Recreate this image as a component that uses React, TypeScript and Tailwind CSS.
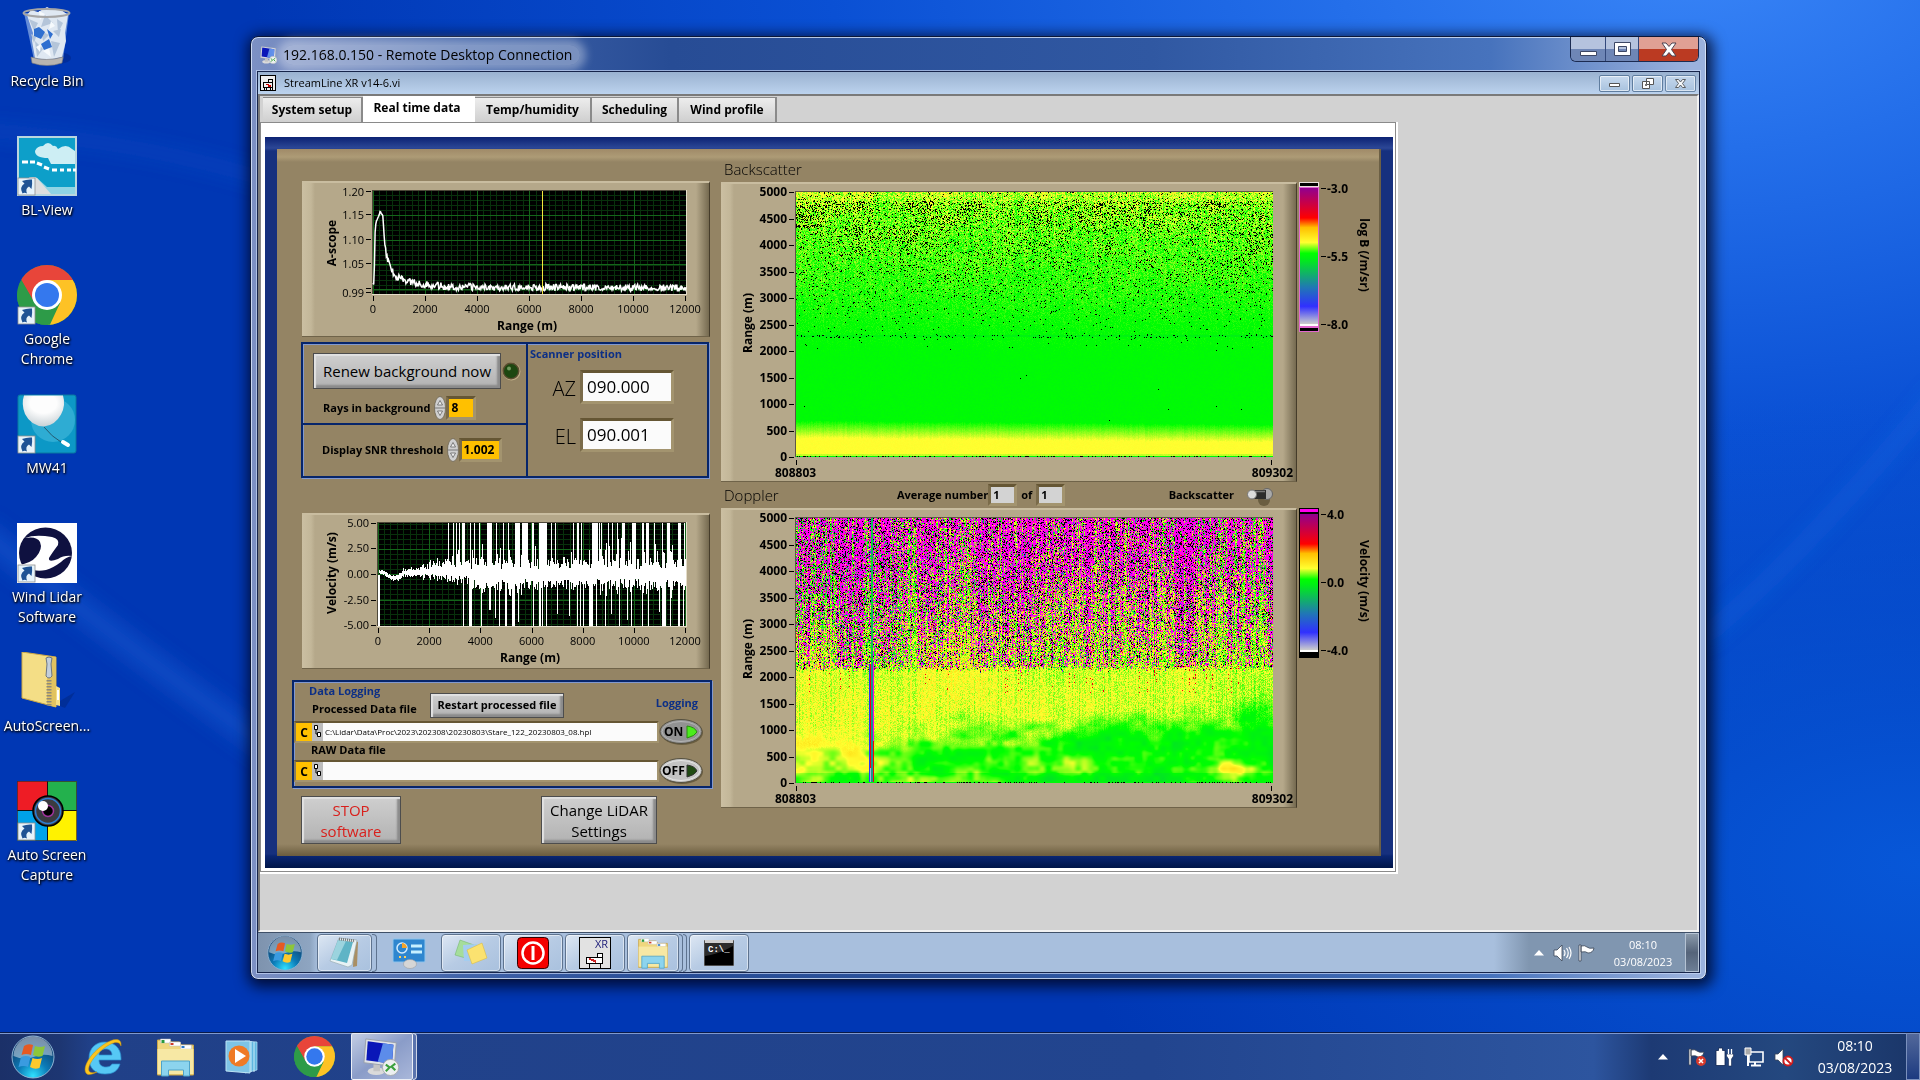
import { useLayoutEffect, useRef, type ReactNode } from "react";

type Rgb = [number, number, number];

function makeRandom(seed: number) {
  let a = seed;
  return () => {
    a = (a + 0x6d2b79f5) | 0;
    let t = Math.imul(a ^ (a >>> 15), 1 | a);
    t = (t + Math.imul(t ^ (t >>> 7), 61 | t)) ^ t;
    return ((t ^ (t >>> 14)) >>> 0) / 4294967296;
  };
}

function hash(x: number, y: number, seed: number) {
  let h = Math.imul(x, 374761393) + Math.imul(y, 668265263) + Math.imul(seed, 974634777);
  h = Math.imul(h ^ (h >>> 13), 1274126177);
  h = Math.imul(h ^ (h >>> 15), 2246822519);
  return ((h ^ (h >>> 16)) >>> 0) / 4294967296;
}

function smoothNoise(x: number, y: number, seed: number) {
  const xi = Math.floor(x);
  const yi = Math.floor(y);
  const fx = x - xi;
  const fy = y - yi;
  const u = fx * fx * (3 - 2 * fx);
  const v = fy * fy * (3 - 2 * fy);
  const top = hash(xi, yi, seed) * (1 - u) + hash(xi + 1, yi, seed) * u;
  const bottom = hash(xi, yi + 1, seed) * (1 - u) + hash(xi + 1, yi + 1, seed) * u;
  return top * (1 - v) + bottom * v;
}

function clamp01(v: number) {
  return Math.min(1, Math.max(0, v));
}

// colour ramp shared by both intensity plots, 0 = bottom of the scale
const RAMP: [number, Rgb][] = [
  [0, [205, 205, 205]],
  [0.13, [48, 48, 255]],
  [0.27, [32, 120, 180]],
  [0.48, [0, 240, 20]],
  [0.52, [0, 255, 0]],
  [0.6, [255, 255, 48]],
  [0.71, [255, 190, 0]],
  [0.78, [255, 0, 0]],
  [1, [144, 0, 144]],
];

function rampColor(v: number): Rgb {
  if (v <= 0) return [0, 0, 0];
  if (v >= 1) return [255, 0, 238];
  for (let i = 1; i < RAMP.length; i++) {
    const [p1, c1] = RAMP[i];
    if (v <= p1) {
      const [p0, c0] = RAMP[i - 1];
      const t = (v - p0) / (p1 - p0);
      return [c0[0] + (c1[0] - c0[0]) * t, c0[1] + (c1[1] - c0[1]) * t, c0[2] + (c1[2] - c0[2]) * t];
    }
  }
  return [0, 0, 0];
}

const MAP_W = 477;
const MAP_H = 265;

function backscatterValue(x: number, y: number, random: () => number) {
  const range = (1 - y / MAP_H) * 5000;
  if (y >= MAP_H - 1) return random() < 0.25 ? -1 : 0.5;
  const edge = 450 - (x / MAP_W) * 80 + (hash(x, 0, 4) - 0.5) * 30;
  if (range < edge + 240) {
    const t = Math.min(1, (edge + 240 - range) / 330);
    const low = range < 60 ? 0.02 : 0;
    return 0.52 + t * 0.082 - low + (random() - 0.5) * 0.008;
  }
  const height = Math.max(0, (range - 1800) / 3200);
  const patch = smoothNoise(x / 22, y / 14, 9);
  let black = height <= 0 ? 0.0002 : Math.pow(height, 1.8) * 0.22 * (0.4 + patch * 1.2);
  if (range > 4840) black *= 0.25;
  if (Math.abs(range - 2290) < 30) black = 0.08;
  if (Math.abs(range - 4370) < 25 && x < 28) black = 0.6;
  if (random() < black) return -1;
  const column = (hash(x, 1, 5) - 0.5) * 0.025 * height;
  const band = Math.abs(range - 2300) < 20 ? -0.03 : 0;
  const top = range > 4700 ? ((range - 4700) / 300) * 0.015 : 0;
  return 0.508 + Math.pow(height, 1.2) * 0.056 + column + band + top + (patch - 0.5) * 0.025 * height + (random() - 0.45) * (0.016 + height * 0.072);
}

function dopplerValue(x: number, y: number, random: () => number) {
  const range = (1 - y / MAP_H) * 5000;
  const u = x / MAP_W;
  if (y >= MAP_H - 1) return random() < 0.25 ? -1 : 0.5;
  if (range < 2250) {
    if (x === 73) return 0.14;
    if (x === 74) return range < 300 ? 0.03 : 0.8;
    if (x === 75 || x === 76) return 0.32;
    if (x === 77) return range < 800 ? 0.8 : 1.2;
  } else if (x === 75 || x === 76) {
    return 0.3 + random() * 0.2;
  }
  const big = smoothNoise(x / 70, y / 22, 21);
  const mid = smoothNoise(x / 18, y / 9, 22);
  const small = smoothNoise(x / 6, y / 5, 23);
  const column = hash(x, 2, 24) - 0.5;
  const wide = smoothNoise(x / 5, 3, 28) - 0.5;
  const upper = clamp01((range - 550 - u * 350 + (mid - 0.5) * 300) / 650);
  const warmLeft = clamp01((0.2 - u) / 0.06) * clamp01((range - 100) / 350) * 0.05;
  const warmRight = clamp01(1 - Math.abs(u - 0.91) / 0.06) * clamp01(1 - Math.abs(range - 280) / 220) * 0.09;
  const low = 0.548 - u * 0.025 + warmLeft + warmRight + (big - 0.5) * 0.07 + (mid - 0.5) * 0.07 + (small - 0.5) * 0.05;
  const side = 0.598 + (smoothNoise(u * 6, y / 70, 25) - 0.5) * 0.05 - Math.abs(u - 0.5) * 0.04 + column * 0.035 + (random() - 0.5) * 0.06;
  let value = low * (1 - upper) + side * upper;
  if (range < 200) value -= 0.02;
  const start = 2150 + column * 120;
  if (range > start) {
    const t = Math.min(1, (range - start) / 2300);
    const run = hash(x, Math.floor((y + hash(x, 6, 27) * 30) / 11), 26);
    const heavy = 0.34 + t * 0.5 + column * 0.7 + wide * 0.35 + (run - 0.5) * 0.45;
    if (random() < heavy) {
      const r = random();
      const pink = 0.42 + t * 0.22 + column * 0.35;
      if (r < pink) return 1.2;
      if (r < pink + 0.2) return -1;
      return 0.1 + random() * 0.9;
    }
    value += (random() - 0.5) * 0.14 - t * 0.02;
  } else if (range > 1700 && column > 0.42 && random() < 0.15) {
    return 0.8;
  }
  return value;
}

function IntensityMap({
  label,
  seed,
  valueAt,
}: {
  label: string;
  seed: number;
  valueAt: (x: number, y: number, random: () => number) => number;
}) {
  const ref = useRef<HTMLCanvasElement>(null);
  useLayoutEffect(() => {
    const ctx = ref.current?.getContext("2d");
    if (!ctx) return;
    const random = makeRandom(seed);
    const image = ctx.createImageData(MAP_W, MAP_H);
    for (let y = 0; y < MAP_H; y++) {
      for (let x = 0; x < MAP_W; x++) {
        const [r, g, b] = rampColor(valueAt(x, y, random));
        const i = (y * MAP_W + x) * 4;
        image.data[i] = r;
        image.data[i + 1] = g;
        image.data[i + 2] = b;
        image.data[i + 3] = 255;
      }
    }
    ctx.putImageData(image, 0, 0);
  }, [seed, valueAt]);
  return (
    <canvas
      ref={ref}
      role="img"
      aria-label={label}
      width={MAP_W}
      height={MAP_H}
      className="block border-t border-l border-[#5d5646] box-content"
    />
  );
}

/* ---------- panel pieces ---------- */

function Bevel({ className, children }: { className: string; children: ReactNode }) {
  return (
    <div
      className={`border-t-2 border-b border-t-[#c9bda0] border-b-[#6f6349] border-r border-r-[#453c2a] bg-[linear-gradient(to_right,#cbbfa2_0,#c3b799_9px,#b5a88a_13px,#b5a88a_calc(100%_-_13px),#756a50_100%)] ${className}`}
    >
      {children}
    </div>
  );
}

function Inset({ className, children }: { className?: string; children: ReactNode }) {
  return (
    <div
      className={`flex border-[3px] border-t-[#655634] border-l-[#7a6b4a] border-r-[#a3946f] border-b-[#a3946f] ${className ?? ""}`}
    >
      {children}
    </div>
  );
}

const STEEL =
  "border border-[#4d4d4d] bg-linear-to-b from-[#cfcfcf] to-[#b2b2b2] shadow-[inset_2px_2px_1px_#e2e2e2,inset_-3px_-3px_2px_#8b8b8b]";

function Spinner({ label }: { label: string }) {
  return (
    <button type="button" aria-label={label} className="block">
      <svg width="12" height="24" viewBox="0 0 12 24">
        <ellipse cx="6" cy="12" rx="5.5" ry="11.5" fill="#d0d0d0" stroke="#6d6552" strokeWidth="0.8" />
        <path d="M1 12h10" stroke="#777" />
        <path d="M6 4.5 8.5 9h-5zM6 19.5 8.5 15h-5z" fill="#eee" stroke="#555" strokeWidth="0.7" />
      </svg>
    </button>
  );
}

function Plot({ x, y, w, h, xs, ys }: { x: number; y: number; w: number; h: number; xs: number; ys: number[] }) {
  const minorX = Array.from({ length: 60 }, (_, i) => (i * xs) / 8).filter((v) => v < w);
  const step = (ys[1] - ys[0]) / 5;
  const minorY = Array.from({ length: 40 }, (_, i) => ys[0] + (i - 6) * step).filter((v) => v > 0 && v < h);
  return (
    <g transform={`translate(${x} ${y})`} shapeRendering="crispEdges">
      <rect x="-1" y="-1" width={w + 2} height={h + 2} fill="#e4dcc8" />
      <rect x="-1" y="-1" width={w + 1} height={h + 1} fill="#4c4738" />
      <rect width={w} height={h} fill="#000" />
      <path d={minorX.map((v) => `M${v} 0v${h}`).join("")} stroke="#08310c" />
      <path d={minorY.map((v) => `M0 ${v}h${w}`).join("")} stroke="#08310c" />
      <path d={minorX.filter((_, i) => i % 8 === 0).map((v) => `M${v} 0v${h}`).join("")} stroke="#14651a" />
      <path d={ys.map((v) => `M0 ${v}h${w}`).join("")} stroke="#14651a" />
    </g>
  );
}

function XTicks({ x, w, y }: { x: number; w: number; y: number }) {
  return (
    <g className="text-[11px]" textAnchor="middle">
      {[0, 2000, 4000, 6000, 8000, 10000, 12000].map((t, i) => (
        <g key={t}>
          <path d={`M${Math.round(x + (w * i) / 6) + 0.5} ${y}v5`} stroke="#000" />
          <text x={x + (w * i) / 6} y={y + 17}>{t}</text>
        </g>
      ))}
    </g>
  );
}

function AScope() {
  const random = makeRandom(7);
  const shape: [number, number][] = [
    [0, 93], [1, 95], [2, 42], [3, 31], [5, 27], [7, 21], [9, 23], [10, 26], [11, 45], [12, 55], [14, 66],
    [17, 76], [21, 83], [27, 88], [38, 91], [55, 94], [80, 96], [313, 97],
  ];
  const points: string[] = [];
  for (let x = 0; x <= 313; x += 0.7) {
    let i = 1;
    while (i < shape.length - 1 && shape[i][0] < x) i++;
    const [x0, y0] = shape[i - 1];
    const [x1, y1] = shape[i];
    const y = y0 + ((y1 - y0) * (x - x0)) / (x1 - x0);
    const jitter = x < 10 ? 2 : 7;
    points.push(`${x.toFixed(1)},${(y + (random() - 0.5) * jitter).toFixed(1)}`);
  }
  return (
    <svg width="408" height="154" viewBox="302 183 408 154" className="block">
      <Plot x={373} y={191} w={313} h={103} xs={52.2} ys={[24, 49, 73, 98]} />
      <g transform="translate(373 191)">
        <polyline points={points.join(" ")} fill="none" stroke="#fff" strokeWidth="1.5" />
        <path d="M169.500 0v103" stroke="#f4e63c" />
      </g>
      <g className="text-[11px]" textAnchor="end">
        {[["1.20", 192], ["1.15", 215], ["1.10", 240], ["1.05", 264], ["0.99", 293]].map(([t, y]) => (
          <g key={t}>
            <text x="364" y={Number(y) + 4}>{t}</text>
            <path d={`M366 ${Number(y) - 0.5}h5`} stroke="#000" />
          </g>
        ))}
        <path d="M366 288.500h5" stroke="#000" />
      </g>
      <XTicks x={373} w={312} y={296} />
      <text x="527" y="330" textAnchor="middle" className="text-[12px] font-bold">Range (m)</text>
      <text transform="translate(336 243) rotate(-90)" textAnchor="middle" className="text-[12px] font-bold">A-scope</text>
    </svg>
  );
}

// [x, width] of the bars clipped at the top of the velocity plot
const UP_SPIKES: [number, number][] = [
  [70, 1], [75, 1], [78, 1], [81, 1], [84, 3], [92, 1], [96, 1], [101, 1], [109, 5], [118, 1], [125, 1], [130, 1],
  [137, 5], [144, 5], [149, 1], [154, 2], [161, 8], [173, 1], [177, 1], [195, 1], [199, 2], [203, 1], [214, 6],
  [221, 1], [223, 1], [230, 1], [234, 1], [239, 1], [244, 3], [254, 4], [264, 2], [268, 3], [276, 1], [284, 1],
  [289, 3], [300, 3], [306, 1],
];
// [x, width, lower end]
const DOWN_SPIKES: [number, number, number][] = [
  [0, 2, 104], [85, 1, 104], [91, 3, 104], [103, 1, 104], [111, 2, 88], [117, 1, 96], [121, 1, 104], [127, 2, 104],
  [134, 3, 104], [140, 1, 100], [155, 1, 104], [161, 2, 104], [164, 1, 104], [168, 1, 104], [179, 1, 92],
  [191, 1, 94], [199, 1, 104], [202, 1, 104], [205, 1, 104], [211, 4, 104], [218, 1, 104], [227, 1, 104],
  [233, 1, 92], [241, 1, 104], [249, 1, 98], [253, 1, 104], [264, 1, 104], [270, 1, 104], [281, 1, 90],
  [284, 4, 104], [292, 1, 104], [300, 2, 104], [305, 1, 104],
];

function VelocityPlot() {
  const random = makeRandom(31);
  const bars: string[] = [];
  for (let x = 1; x < 308; x++) {
    const grow = Math.min(1, x / 95) ** 1.5;
    const center = x < 25 ? 52 + Math.sin(x / 4.5 - 2) * 3 : 51 - Math.min(3, x / 20) + (x > 90 ? 3 : 0);
    const burst = random() < 0.22 ? 10 : 0;
    const up = 1 + grow * 4 + random() * (1 + grow * 11) + grow * burst * random() * 2;
    const down = 1 + grow * 4 + random() * (1 + grow * 10) + grow * burst * random();
    bars.push(`M${x + 0.5} ${(center - up).toFixed(1)}V${(center + down).toFixed(1)}`);
  }
  return (
    <svg width="408" height="154" viewBox="302 515 408 154" className="block">
      <Plot x={378} y={523} w={308} h={103} xs={51.3} ys={[26, 51, 77]} />
      <g transform="translate(378 523)" shapeRendering="crispEdges">
        <path d={bars.join("")} stroke="#fff" strokeWidth="1.2" />
        {UP_SPIKES.map(([x, w]) => <rect key={x} x={x} y="0" width={w} height="50" fill="#fff" />)}
        {DOWN_SPIKES.map(([x, w, end]) => <rect key={x} x={x} y="52" width={w} height={end - 53} fill="#fff" />)}
      </g>
      <g className="text-[11px]" textAnchor="end">
        {[["5.00", 523], ["2.50", 548], ["0.00", 574], ["-2.50", 600], ["-5.00", 625]].map(([t, y]) => (
          <g key={t}>
            <text x="369" y={Number(y) + 4}>{t}</text>
            <path d={`M371 ${Number(y) + 0.5}h5`} stroke="#000" />
          </g>
        ))}
      </g>
      <XTicks x={378} w={307} y={628} />
      <text x="530" y="662" textAnchor="middle" className="text-[12px] font-bold">Range (m)</text>
      <text transform="translate(336 573) rotate(-90)" textAnchor="middle" className="text-[12px] font-bold">Velocity (m/s)</text>
    </svg>
  );
}

function MapPanel({ children }: { children: ReactNode }) {
  return (
    <Bevel className="h-[300px] w-[576px] pt-[7px] flex">
      <svg width="74" height="282" className="block shrink-0 overflow-visible text-[12px] font-bold">
        {Array.from({ length: 11 }, (_, i) => (
          <g key={i}>
            <text x="66" y={5 + i * 26.5} textAnchor="end">{5000 - i * 500}</text>
            <path d={`M68 ${Math.round(i * 26.5) + 1.5}h5`} stroke="#000" />
          </g>
        ))}
        <text transform="translate(31 132) rotate(-90)" textAnchor="middle">Range (m)</text>
        <path d="M75.500 269v5M550.500 269v5" stroke="#000" />
      </svg>
      <div className="w-[478px]">
        {children}
        <div className="-mx-5 mt-2 flex justify-between text-[12px] font-bold leading-4">
          <span>808803</span>
          <span>809302</span>
        </div>
      </div>
    </Bevel>
  );
}

function ColorScale({ id, top, bottom, labels, name }: { id: string; top: string; bottom: string; labels: string[]; name: string }) {
  return (
    <svg width="80" height="152" className="block ml-[2px] overflow-visible text-[12px] font-bold">
      <defs>
        <linearGradient id={id} x1="0" x2="0" y1="1" y2="0">
          {RAMP.map(([p, [r, g, b]]) => (
            <stop key={p} offset={p} stopColor={`rgb(${r} ${g} ${b})`} />
          ))}
        </linearGradient>
      </defs>
      <rect x="0" y="0" width="20" height="150" fill={bottom} />
      <rect x="0" y="0" width="20" height="5" fill={bottom === "#000" ? "#000" : "#e8e0dc"} />
      <rect x="1" y="1" width="18" height="3" fill={top} />
      <rect x="1" y="6" width="18" height="136" fill={`url(#${id})`} />
      <rect x="1" y="142" width="18" height="2" fill="#fff" />
      <rect x="1" y="146" width="18" height="3" fill="#000" />
      {labels.map((t, i) => (
        <g key={t}>
          <path d={`M22 ${6.5 + i * 68}h5`} stroke="#000" />
          <text x="28" y={11 + i * 68}>{t}</text>
        </g>
      ))}
      <text transform="translate(61 73) rotate(90)" textAnchor="middle">{name}</text>
    </svg>
  );
}

function PathField({ id, value }: { id: string; value: string }) {
  return (
    <div className="flex h-[22px] w-[365px] border-[2px] border-t-[#655634] border-l-[#8b7c5b] border-r-[#a3946f] border-b-[#a3946f]">
      <button type="button" className="w-[16px] bg-[#ffc000] text-[12px] leading-[17px]">C</button>
      <svg width="11" height="18" className="bg-[#bdbdbd]">
        <path d="M2.500 2.500h3v4h-3zM5.500 9.500h3v4h-3zM4 7v4h1" fill="#fff" stroke="#000" />
      </svg>
      <input id={id} readOnly value={value} className="min-w-0 flex-1 bg-[#fbfbfb] pl-[2px] text-[8px] font-medium text-black" />
    </div>
  );
}

function LogToggle({ on }: { on: boolean }) {
  return (
    <button type="button" aria-pressed={on} className="block">
      <svg width="44" height="26" viewBox="0 0 44 26" className="text-[12px] font-bold">
        <ellipse cx="23" cy="14" rx="21" ry="12" fill="#6b5e40" />
        <ellipse cx="22" cy="12.500" rx="21" ry="12" fill={on ? "#929292" : "#c3c3c3"} stroke="#55503f" />
        <ellipse cx="22" cy="12.500" rx="19" ry="10" fill="none" stroke={on ? "#b5b5b5" : "#e6e6e6"} />
        <path d="M28 7q8 1 10 6q-2 4-10 6z" fill={on ? "#4bec1c" : "#1f4a12"} stroke={on ? "#2a8d10" : "#333"} />
        <text x={on ? 5 : 3} y="17">{on ? "ON" : "OFF"}</text>
      </svg>
    </button>
  );
}

/* ---------- icons ---------- */

function Shortcut() {
  return (
    <g>
      <rect x="1" y="42" width="17" height="17" fill="#e6f3fb" stroke="#8f8f8f" strokeWidth="0.8" />
      <path d="M5.500 57.500Q2 51 7.500 47.500L5 45q5-2 10-1.500.5 4.500-.5 9.500L12 50.500q-4 2-2 7-2.500-1.500-4.500 0z" fill="#1f5394" />
    </g>
  );
}

function ChromeLogo({ id }: { id: string }) {
  return (
    <g>
      <clipPath id={id}><circle cx="30" cy="30" r="30" /></clipPath>
      <g clipPath={`url(#${id})`}>
        <rect width="60" height="60" fill="#2d9b48" />
        <path d="M4.500 15-2 5V-2h64v17H30v10l-13 12z" fill="#e8453a" />
        <path d="M30 15h32v50H28l15-27z" fill="#fdc225" />
        <path d="M4 15-4 40l15 25h19.500L43 38 17 37z" fill="#2d9b48" />
      </g>
      <circle cx="30" cy="30" r="15" fill="#fff" />
      <circle cx="30" cy="30" r="12" fill="#3478ee" />
    </g>
  );
}

function RecycleBin() {
  return (
    <svg width="60" height="60" viewBox="0 0 60 60">
      <ellipse cx="40" cy="51" rx="14" ry="6" fill="#001d70" opacity="0.35" />
      <path d="M7 6h45l-6 47q-15 6-29 0z" fill="#8fb0e6" opacity="0.7" />
      <path d="M10 8 14 3l7 2 9-5 6 3 7-1 8 6-3 18 1 8-4 16-14 3-13-2-3-17 1-8z" fill="#dfe8f2" />
      <path d="M12 12l9 4-4 8zM28 8l8 8-12 4zM40 12l6 4-5 10zM18 34l8 8-6 8zM34 34l9 2-6 14zM24 24l8 4-6 6zM36 24l8-2-2 8zM14 27l5 3-2 6z" fill="#b4c5d9" />
      <path d="M22 4l6 3-5 6zM34 14l4 5-6 3zM26 44l6-3 2 9zM19 40l5-3-1 8z" fill="#f6fafd" />
      <path d="M17 22l5-2 6 5-4 7-7-3zM24 37l8-5 3 8-8 3zM30 22l6 5-3 5z" fill="#2f6fd0" />
      <ellipse cx="29.500" cy="6" rx="23" ry="4" fill="none" stroke="#a5a5a5" strokeWidth="2" />
      <path d="M14 50q15 5 32 0l-1 6q-15 5-30 0z" fill="#b8b4b0" stroke="#777" strokeWidth="0.6" />
    </svg>
  );
}

function BlViewIcon() {
  return (
    <svg width="60" height="60" viewBox="0 0 60 60">
      <rect width="60" height="60" fill="#b9d6df" />
      <rect x="2" y="2" width="56" height="56" fill="#0d9fc9" />
      <path d="M18 15q2-5 8-5 5-6 10 0 3-1 5 3 8-6 14 0l3 2v13H34q-2-4-3-6-13 0-13-7z" fill="#cdeef4" />
      <path d="M5 26h6M13 26h5M20 27l5 2M27 31l5 2M35 34h5M43 34h4M50 34h4M56 34h3" stroke="#fff" strokeWidth="3" />
      <path d="M2 50q10-12 18-8l10 9q10 0 28 0v7H2z" fill="#8fd4e4" />
      <path d="M2 50q10-12 18-8l14 16H2z" fill="#dedede" />
      <Shortcut />
    </svg>
  );
}

function Mw41Icon() {
  return (
    <svg width="60" height="60" viewBox="0 0 60 60">
      <defs>
        <radialGradient id="balloon" cx="0.5" cy="0.25" r="0.8">
          <stop offset="0.4" stopColor="#fdfdfd" />
          <stop offset="1" stopColor="#c3ccd1" />
        </radialGradient>
      </defs>
      <rect x="1" y="1" width="58" height="58" rx="2" fill="#0c98c6" stroke="#0878a0" />
      <circle cx="36" cy="26" r="22" fill="#4fbfe0" opacity="0.5" />
      <path d="M7 1.500h39q3 10-2 19-6 11-17 12Q14 32 8 20q-4-10-1-18.500z" fill="url(#balloon)" />
      <path d="M27 33q8 10 17 15" fill="none" stroke="#245a70" />
      <path d="m46 48 5 3" stroke="#fff" strokeWidth="4" strokeLinecap="round" />
      <Shortcut />
    </svg>
  );
}

function WindLidarIcon() {
  return (
    <svg width="60" height="60" viewBox="0 0 60 60">
      <rect width="60" height="60" fill="#fff" />
      <ellipse cx="28.500" cy="30" rx="26.500" ry="25.500" fill="#0f1140" />
      <path d="M8 15q10-4 27-1 8 2 6 8-6 8-9 13-1 5 9 1 6-4 14-3-6 1-11 6-8 6-15 8-11 2-17-2l-10-3q12-2 17-8 7-8 4-15-3-6-15-4z" fill="#fff" />
      <Shortcut />
    </svg>
  );
}

function ZipIcon() {
  return (
    <svg width="60" height="60" viewBox="0 0 60 60">
      <path d="M38 52l20-12-10 16z" fill="#00206e" opacity="0.4" />
      <path d="M5 0 39 5v50L5 46z" fill="#f4de86" stroke="#cda944" />
      <path d="M30 4l9 1.500V55l-9-2z" fill="#e2c360" />
      <path d="M39 34l4 2v18l-4-1z" fill="#f4de86" />
      <path d="M40 38h2v10h-2z" fill="#fff" />
      <path d="M32 28v26" stroke="#8d8a7c" strokeWidth="5" strokeDasharray="1.5 1.5" />
      <path d="M29 6q3-2 6 0l-1 6 1 12q-3 4-6 0l1-12z" fill="#c3cfdb" stroke="#6c7682" />
    </svg>
  );
}

function AutoCaptureIcon() {
  return (
    <svg width="60" height="60" viewBox="0 0 60 60">
      <path d="M0 0h30v30H0z" fill="#ee1c25" />
      <path d="M30 0h30v30H30z" fill="#23b14d" />
      <path d="M0 30h30v30H0z" fill="#00a2e8" />
      <path d="M30 30h30v30H30z" fill="#fff200" />
      <path d="M30.500 0v60M0 29.500h60" stroke="#111" />
      <rect x=".5" y=".5" width="59" height="59" fill="none" stroke="#3c2a2a" strokeWidth="0.7" />
      <circle cx="31" cy="30" r="15" fill="#3b3b40" stroke="#000" strokeWidth="1.500" />
      <circle cx="31" cy="30" r="12.500" fill="none" stroke="#2e7fd2" strokeWidth="1.500" />
      <circle cx="31" cy="30" r="5.500" fill="#000" stroke="#a0349c" strokeWidth="1.500" />
      <circle cx="26" cy="25" r="5" fill="#fff" />
      <Shortcut />
    </svg>
  );
}

function StartOrb({ size, id }: { size: number; id: string }) {
  return (
    <svg width={size} height={size} viewBox="0 0 44 44">
      <defs>
        <radialGradient id={id} cx="0.5" cy="0.95" r="0.9">
          <stop offset="0" stopColor="#2fe0ff" />
          <stop offset="0.4" stopColor="#0c7cb8" />
          <stop offset="1" stopColor="#12305c" />
        </radialGradient>
      </defs>
      <circle cx="22" cy="22" r="21" fill={`url(#${id})`} stroke="#8eb4d4" />
      <path d="M2.500 21a19.500 19.500 0 0 1 39 0q-10-3-19 1-9 4-20-1z" fill="#cfdfea" opacity="0.55" />
      <path d="M13 11q4-3 9-1l-2 10q-5-2-9.500 0z" fill="#e65a23" />
      <path d="M24 11q5 2 10 0l-2.500 10q-5 2-9.500-1z" fill="#8dc63a" />
      <path d="M10 22q5-2 9.500 0L17 32q-4-2-9.500 0z" fill="#3a9be0" />
      <path d="M21.500 23q5 2 9.500 0l-2.500 10q-5 2-9.500-1z" fill="#fcc92e" />
    </svg>
  );
}

function FolderIcon({ width, height }: { width: number; height: number }) {
  return (
    <svg width={width} height={height} viewBox="0 0 40 40">
      <path d="M2 3h12l2 2h8l2 3h12v30H2z" fill="#efd77e" stroke="#c9a64a" />
      <path d="M5 2h10v4H5zM14 5h11v4H14zM25 8h11v4H25z" fill="#fff" stroke="#bbb" strokeWidth="0.5" />
      <path d="M6 3h3v3H6z" fill="#2a9a3c" />
      <path d="M15 6h3v2h-3z" fill="#cf3a2a" />
      <path d="M26 9h3v2h-3z" fill="#2a78c8" />
      <path d="M2 12h36v25H2z" fill="#f7e8a4" />
      <path d="M6 39V24h28v15h-6v-6H13v6z" fill="#8cd4ee" stroke="#4fa3c8" />
    </svg>
  );
}

function InternetExplorer() {
  return (
    <svg width="40" height="40" viewBox="0 0 40 40">
      <path fillRule="evenodd" d="M21 5c9 0 16 6 16 16v2H15c0 5 3 7 7 7 3 0 5-1 6-3h8c-2 7-7 10-15 10C11 37 5 31 5 21S12 5 21 5zm-6 13h13c0-4-3-6-6-6-4 0-7 2-7 6z" fill="#56c8f5" stroke="#2a8fd0" strokeWidth="0.7" />
      <path d="M37 9c1-9-8-8-18-1C7 16-2 30 2 36c2 3 7 1 11-1-4 1-7 1-8-1-2-5 5-15 14-22C28 5 35 3 37 9z" fill="#fcc51e" stroke="#c9900c" strokeWidth="0.5" />
    </svg>
  );
}

function MediaPlayer() {
  return (
    <svg width="34" height="36" viewBox="0 0 34 36">
      <path d="M20 2l12 1v28l-12 3z" fill="#5fb6e0" stroke="#b7e4f8" strokeWidth="0.7" />
      <path d="M29 3v30M26 2v31" stroke="#c9ecfa" />
      <path d="M1 2h24v32l-24-2z" fill="#7ec4e6" stroke="#bde4f5" />
      <circle cx="14" cy="17" r="10.500" fill="#ef7a26" />
      <path d="M10 10v14l11-7z" fill="#fff" />
    </svg>
  );
}

function RdpIcon({ size }: { size: number }) {
  return (
    <svg width={size} height={size} viewBox="0 0 40 40">
      <ellipse cx="14" cy="35" rx="9" ry="4" fill="#dadada" />
      <path d="M11 27h7v8h-7z" fill="#c4c4c4" />
      <path d="M3 1 35 5l-2 25L1 26z" fill="#dfe3e8" stroke="#9aa0aa" />
      <path d="M5 3.500 32 7l-1.500 20L3.500 23.500z" fill="#0a17b8" />
      <path d="M21 5.500 32 7l-1.500 20-15-2z" fill="#5c8cea" />
      <circle cx="29" cy="31" r="8.500" fill="#eceff0" stroke="#a6aaad" />
      <path d="m24 28 4 3-4 4M34 27l-4 3 4 4" fill="none" stroke="#3aa03c" strokeWidth="2.200" />
    </svg>
  );
}

function Tower({ size }: { size: number }) {
  return (
    <svg width={size} height={size} viewBox="0 0 16 16" shapeRendering="crispEdges">
      <rect x=".5" y=".5" width="15" height="15" fill="#efefef" stroke="#000" />
      <path d="M3.500 7.500h9v5h-9zM8 7V4h4v3M4 13v2M12 13v2M6 13v2M10 13v2" fill="none" stroke="#000" />
      <path d="M6 9h2v1h2v1H8" fill="none" stroke="#c00" />
    </svg>
  );
}

function FlagIcon() {
  return (
    <svg width="18" height="18" viewBox="0 0 18 18">
      <path d="M2 1h2v16H2zM4 2q4-1 6 1 2 2 7 1-1 5-6 5-2-2-7-1z" fill="#fff" stroke="#3a4555" strokeWidth="0.8" />
    </svg>
  );
}

function SpeakerIcon({ waves }: { waves: boolean }) {
  return (
    <svg width="20" height="20" viewBox="0 0 20 20">
      <path d="M1 7h3l5-5v16l-5-5H1z" fill="#fff" stroke="#3a4555" strokeWidth="0.8" />
      {waves ? (
        <path d="M11 7q2 3 0 6M13.500 5q3.500 5 0 10M16 4q4 6 0 12" fill="none" stroke="#fff" strokeWidth="1.200" />
      ) : (
        <g>
          <circle cx="14" cy="14" r="4.500" fill="#fff" stroke="#d11c1c" strokeWidth="1.800" />
          <path d="m11 11 6 6" stroke="#d11c1c" strokeWidth="1.800" />
        </g>
      )}
    </svg>
  );
}

function UpArrow() {
  return (
    <svg width="10" height="6" viewBox="0 0 10 6"><path d="M5 0l5 5.500H0z" fill="#fff" /></svg>
  );
}

/* ---------- desktop ---------- */

const DESKTOP_ICONS = [
  { label: "Recycle Bin", icon: <RecycleBin /> },
  { label: "BL-View", icon: <BlViewIcon /> },
  {
    label: "Google Chrome",
    icon: (
      <svg width="60" height="60" viewBox="0 0 60 60">
        <ChromeLogo id="chrome-desktop" />
        <Shortcut />
      </svg>
    ),
  },
  { label: "MW41", icon: <Mw41Icon /> },
  { label: "Wind Lidar Software", icon: <WindLidarIcon /> },
  { label: "AutoScreen...", icon: <ZipIcon /> },
  { label: "Auto Screen Capture", icon: <AutoCaptureIcon /> },
];

function Wallpaper() {
  return (
    <svg className="absolute inset-0 h-full w-full" viewBox="0 0 1920 1080" preserveAspectRatio="none" aria-hidden="true">
      <defs>
        <radialGradient id="sky" cx="0.88" cy="-0.05" r="0.75">
          <stop offset="0" stopColor="#3a86f8" />
          <stop offset="0.25" stopColor="#246fea" />
          <stop offset="0.6" stopColor="#0a50d4" />
          <stop offset="1" stopColor="#0037b4" />
        </radialGradient>
        <radialGradient id="corner" cx="1" cy="0.8" r="0.45">
          <stop offset="0" stopColor="#0757d8" />
          <stop offset="1" stopColor="#0757d8" stopOpacity="0" />
        </radialGradient>
        <filter id="soft"><feGaussianBlur stdDeviation="10" /></filter>
      </defs>
      <rect width="1920" height="1080" fill="url(#sky)" />
      <rect width="1920" height="1080" fill="url(#corner)" />
      <g filter="url(#soft)" fill="none" stroke="#2f7cf0">
        <path d="M-20 130Q150 140 300 190" strokeWidth="8" opacity="0.25" />
        <path d="M-20 530Q130 650 300 770" strokeWidth="24" opacity="0.3" />
        <path d="M1700 640Q1800 560 1940 390" strokeWidth="10" opacity="0.35" />
      </g>
    </svg>
  );
}

const TABS = [
  { name: "System setup", width: "w-[100px]" },
  { name: "Real time data", width: "w-[112px]" },
  { name: "Temp/humidity", width: "w-[117px]" },
  { name: "Scheduling", width: "w-[87px]" },
  { name: "Wind profile", width: "w-[98px]" },
];

function TabStrip() {
  return (
    <div role="tablist" className="flex h-[26px] items-end pl-[3px] text-[12px] font-bold">
      {TABS.map(({ name, width }) => {
        const active = name === "Real time data";
        return (
          <button
            key={name}
            type="button"
            role="tab"
            aria-selected={active}
            className={`${width} ${
              active
                ? "h-[26px] bg-white pb-[2px] pr-1"
                : "h-[25px] border-t border-r-2 border-[#8a8a8a] bg-linear-to-b from-[#ededed] to-[#cfcfcf]"
            }`}
          >
            {name}
          </button>
        );
      })}
    </div>
  );
}

const GROUP = "border-2 border-[#06256b] shadow-[inset_1px_1px_0_#8299cf,1px_1px_0_#8299cf]";

function ControlGroup() {
  return (
    <div className={`ml-[9px] mt-[5px] flex h-[136px] w-[408px] ${GROUP}`}>
      <div className="w-[225px] border-r-2 border-[#06256b]">
        <div className="h-[81px] border-b-2 border-[#06256b] pl-[10px] pt-[9px]">
          <div className="flex items-center">
            <button type="button" className={`h-9 w-[188px] text-[15px] ${STEEL}`}>Renew background now</button>
            <svg width="20" height="20" viewBox="0 0 20 20">
              <circle cx="10.500" cy="10.500" r="9" fill="#bfae86" />
              <circle cx="10" cy="10" r="8.500" fill="#5a4d30" />
              <circle cx="10" cy="10" r="7" fill="#1d4710" />
              <circle cx="8" cy="7.500" r="2" fill="#6f9a5e" />
            </svg>
          </div>
          <div className="mt-[7px] flex items-center pl-[10px] text-[12px] font-bold">
            <label htmlFor="rays" className="mr-1 text-[11px]">Rays in background</label>
            <Spinner label="Change rays in background" />
            <Inset className="h-6 w-[30px]">
              <input id="rays" readOnly value="8" className="w-full bg-[#ffc000] pl-[2px]" />
            </Inset>
          </div>
        </div>
        <div className="flex items-center pl-[19px] pt-[13px] text-[12px] font-bold">
          <label htmlFor="snr" className="mr-[3px] text-[11px]">Display SNR threshold</label>
          <Spinner label="Change SNR threshold" />
          <Inset className="h-6 w-[43px]">
            <input id="snr" readOnly value="1.002" className="w-full bg-[#ffc000] pl-[2px]" />
          </Inset>
        </div>
      </div>
      <div className="flex-1 pl-[2px]">
        <h3 className="text-[11px] font-bold leading-5 text-[#0c2f86]">Scanner position</h3>
        {[["AZ", "090.000"], ["EL", "090.001"]].map(([name, value]) => (
          <div key={name} className="mb-[14px] mt-[6px] flex h-[34px] items-center">
            <label htmlFor={name} className="w-[50px] pr-1 pt-[4px] text-right text-[20px] font-light">{name}</label>
            <Inset className="h-[34px] w-[94px]">
              <input id={name} readOnly value={value} className="w-full bg-[#fbfbfb] pl-1 text-[17px]" />
            </Inset>
          </div>
        ))}
      </div>
    </div>
  );
}

function LoggingGroup() {
  return (
    <div className={`mt-[11px] h-[108px] w-[420px] text-[11px] font-bold ${GROUP}`}>
      <div className="flex h-[37px] items-start pl-[15px]">
        <div className="w-[121px] leading-[18px]">
          <h3 className="text-[#0c2f86]">Data Logging</h3>
          <label htmlFor="processed" className="ml-[3px]">Processed Data file</label>
        </div>
        <button type="button" className={`mt-[11px] h-[25px] w-[134px] ${STEEL}`}>Restart processed file</button>
        <span className="ml-auto mr-[12px] mt-[13px] leading-4 text-[#0c2f86]">Logging</span>
      </div>
      <div className="flex items-center">
        <PathField id="processed" value="C:\Lidar\Data\Proc\2023\202308\20230803\Stare_122_20230803_08.hpl" />
        <LogToggle on />
      </div>
      <label htmlFor="raw" className="-mt-1 block pl-[17px] leading-[18px]">RAW Data file</label>
      <div className="-mt-px flex items-center">
        <PathField id="raw" value="" />
        <LogToggle on={false} />
      </div>
    </div>
  );
}

function FrontPanel() {
  return (
    <div className="w-fit border-r-2 border-b-2 border-white bg-white">
      <div className="border border-[#8a8a8a] bg-white pl-1 pr-[2px] pb-[3px] pt-[14px]">
        <div className="bg-[linear-gradient(to_bottom,#0c2273_0,#2c4796_11px,#16307e_14px,#16307e_calc(100%_-_14px),#0a2672_calc(100%_-_12px),#001648_100%)] px-[12px] py-[12px]">
          <div className="flex h-[707px] w-[1104px] border-r-2 border-r-[#6b5f45] bg-[linear-gradient(to_bottom,#a08a68_0,#ad9b76_8px,#948464_13px,#948464_calc(100%_-_12px),#6b5c3e_100%)] pl-[15px]">
            <div className="w-[429px] pt-8">
              <Bevel className="ml-[10px] h-[156px] w-[408px]"><AScope /></Bevel>
              <ControlGroup />
              <Bevel className="ml-[10px] mt-[35px] h-[156px] w-[408px]"><VelocityPlot /></Bevel>
              <LoggingGroup />
              <div className="mt-2 flex gap-[140px] pl-[9px] text-[15px] leading-[21px]">
                <button type="button" className={`h-12 w-[100px] pt-px text-[#d8201c] ${STEEL}`}>STOP software</button>
                <button type="button" className={`h-12 w-[116px] pt-px ${STEEL}`}>Change LiDAR Settings</button>
              </div>
            </div>
            <div>
              <h2 className="h-[33px] pl-[3px] pt-2 text-[15px] font-light leading-6">Backscatter</h2>
              <MapPanel>
                <IntensityMap label="Backscatter intensity" seed={11} valueAt={backscatterValue} />
              </MapPanel>
              <div className="flex h-[26px] items-center pl-[3px] text-[11px] font-bold">
                <h2 className="w-[173px] text-[15px] font-light leading-6">Doppler</h2>
                <label htmlFor="avg">Average number</label>
                <Inset className="h-[22px] w-[29px]">
                  <input id="avg" readOnly value="1" className="w-full bg-[#d3d3d3] pl-[2px]" />
                </Inset>
                <label htmlFor="avg-total" className="mx-1">of</label>
                <Inset className="h-[22px] w-[29px]">
                  <input id="avg-total" readOnly value="1" className="w-full bg-[#d3d3d3] pl-[2px]" />
                </Inset>
                <button type="button" className="ml-auto mr-6 flex items-center gap-[13px]">
                  Backscatter
                  <svg width="26" height="22" viewBox="0 0 26 22">
                    <ellipse cx="17" cy="16" rx="6" ry="6" fill="#6a5d40" />
                    <circle cx="20" cy="10" r="5.500" fill="#a9a9a9" stroke="#666" />
                    <path d="M4 6h15v9H4z" fill="#2c2c2c" />
                    <path d="M5 7.500h13" stroke="#777" strokeWidth="1.500" />
                    <circle cx="5" cy="10.500" r="4.500" fill="#dcdcdc" stroke="#777" />
                  </svg>
                </button>
              </div>
              <MapPanel>
                <IntensityMap label="Doppler velocity" seed={17} valueAt={dopplerValue} />
              </MapPanel>
            </div>
            <div className="flex flex-col gap-[174px] pt-[33px]">
              <ColorScale id="ramp-b" top="#000" bottom="#e267cf" labels={["-3.0", "-5.5", "-8.0"]} name="log B (/m/sr)" />
              <ColorScale id="ramp-v" top="#ff00ee" bottom="#000" labels={["4.0", "0.0", "-4.0"]} name="Velocity (m/s)" />
            </div>
          </div>
        </div>
      </div>
    </div>
  );
}

const TASK = "flex h-[38px] items-center justify-center rounded-sm border border-[#5e738f] bg-linear-to-br from-[#dde7f3] via-[#b7cbe4] to-[#a9c1de] shadow-[inset_0_0_0_1px_rgba(255,255,255,0.5)]";

function RemoteTaskbar() {
  return (
    <div className="flex h-10 items-center border-t border-[#3f5068] bg-[linear-gradient(to_right,#7e93ae_0,#8ea5c1_52px,#a8bfdd_60px,#a8bfdd_calc(100%_-_205px),#8096b0_calc(100%_-_170px),#8096b0_100%)]">
      <button type="button" aria-label="Start" className="ml-[9px] mr-[14px]"><StartOrb size={36} id="orb-remote" /></button>
      <button type="button" aria-label="Notepad" className={`w-[55px] ${TASK}`}>
        <svg width="34" height="34" viewBox="0 0 34 34">
          <path d="M26 4l4 2-1 24-4 1z" fill="#a98f64" />
          <path d="M11 2l18 2-5 25-4 2L2 25z" fill="#e8f2f5" stroke="#95a7ad" strokeWidth="0.600" />
          <path d="M10 4l15 2-6 21L3 23z" fill="#5fb4c6" />
          <path d="M10 4l8 1-9 19-6-1z" fill="#9bd3de" />
          <path d="M11 3l16 2" stroke="#777" strokeWidth="3" strokeDasharray="1 1" />
        </svg>
      </button>
      <span className="h-[38px] w-[5px] rounded-r-sm border border-[#5e738f] border-l-0" />
      <button type="button" aria-label="Control panel" className="ml-[15px] mr-[15px] w-[34px]">
        <svg width="34" height="32" viewBox="0 0 34 32">
          <rect x="1" y="2" width="32" height="23" rx="1" fill="#2e86cf" stroke="#8fc4ec" />
          <circle cx="10" cy="11" r="5" fill="none" stroke="#d2ecff" strokeWidth="1.500" />
          <path d="M10 11V6a5 5 0 0 1 5 5z" fill="#f5a42a" />
          <path d="M19 9h11M19 15h11" stroke="#c6f0ff" strokeWidth="3" />
          <path d="M7 20h2M12 20h2" stroke="#ffcf5a" strokeWidth="2" />
          <ellipse cx="18" cy="27" rx="6.500" ry="4.500" fill="#d6d6d6" stroke="#999" strokeWidth="0.500" />
        </svg>
      </button>
      <div className="flex gap-[2px]">
        <button type="button" aria-label="Sticky notes" className={`w-[60px] ${TASK}`}>
          <svg width="34" height="30" viewBox="0 0 34 30">
            <path d="M6 2l14 5-5 14L1 17z" fill="#a5dd9b" stroke="#6db564" strokeWidth="0.500" />
            <path d="M9 7l14-1v17H10z" fill="#a4cdf0" />
            <path d="M13 12l15-7 5 15-15 6z" fill="#fbe270" stroke="#d8b836" strokeWidth="0.500" />
          </svg>
        </button>
        <button type="button" aria-label="Shut down" className={`w-[60px] ${TASK}`}>
          <svg width="32" height="32" viewBox="0 0 32 32">
            <rect x=".5" y=".5" width="31" height="31" rx="4" fill="#f40000" stroke="#300" />
            <circle cx="16" cy="16" r="10.500" fill="none" stroke="#fff" strokeWidth="2.500" />
            <path d="M16 9v14" stroke="#fff" strokeWidth="3" />
          </svg>
        </button>
        <button type="button" aria-label="StreamLine XR" className={`w-[60px] ${TASK}`}>
          <svg width="32" height="32" viewBox="0 0 32 32" shapeRendering="crispEdges">
            <rect x=".5" y=".5" width="31" height="31" fill="#e2e2e2" stroke="#000" />
            <text x="16" y="11" className="text-[11px]" fill="#1b1b78">XR</text>
            <path d="M7.500 20.500h16v6h-16zM18 20v-4h5v4M10 27v4M21 27v4" fill="#fff" stroke="#000" />
            <path d="M10 22l4 1 3 2" stroke="#c22" strokeWidth="2" fill="none" />
          </svg>
        </button>
        <button type="button" aria-label="Explorer" className={`w-[52px] ${TASK}`}><FolderIcon width={34} height={32} /></button>
      </div>
      <span className="h-[38px] w-[4px] rounded-r-sm border border-[#5e738f] border-l-0" />
      <span className="mr-[2px] h-[38px] w-[4px] rounded-r-sm border border-[#5e738f] border-l-0" />
      <button type="button" aria-label="Command prompt" className={`w-[60px] ${TASK}`}>
        <svg width="30" height="26" viewBox="0 0 30 26">
          <rect width="30" height="26" fill="#000" stroke="#999" />
          <rect x="1" y="0" width="28" height="3" fill="#cfcfcf" />
          <path d="M1 16q14-2 28-10V3H1z" fill="#2c2c2c" />
          <text x="4" y="12" className="font-['Liberation_Mono',monospace] text-[9px] font-bold" fill="#fff">C:\_</text>
        </svg>
      </button>
      <div className="ml-auto flex h-full items-center text-white">
        <UpArrow />
        <span className="ml-[9px]"><SpeakerIcon waves /></span>
        <span className="ml-1"><FlagIcon /></span>
        <time className="ml-[17px] w-[62px] text-center text-[11px] leading-[17px]">08:10<br />03/08/2023</time>
        <span className="ml-[11px] h-full w-[14px] border border-[#b5c3d4] bg-linear-to-b from-[#8b9aab] via-[#55647a] to-[#6d7e95]" />
      </div>
    </div>
  );
}

const MDI_BUTTON = "flex h-[17px] w-[31px] items-center justify-center rounded-xs border border-[#5f7d9f] bg-linear-to-b from-[#c9dbef] to-[#a8c2de] shadow-[inset_0_0_0_1px_rgba(255,255,255,0.6)]";

function RemoteDesktopWindow() {
  return (
    <section className="relative mb-[52px] ml-[156px] mr-[213px] mt-9 flex flex-1 flex-col rounded-lg border border-[#0b1738] bg-[linear-gradient(to_right,#7d91c4_0,#3f62a8_220px,#274c95_420px,#3058a2_900px,#4773bd_1240px,#9bb2dd_1440px)] px-[7px] pb-[7px] shadow-[inset_0_0_0_1px_rgba(230,240,255,0.75),2px_3px_14px_4px_rgba(0,0,20,0.75)]">
      <header className="flex h-[35px] items-start">
        <div className="ml-[2px] mt-[8px] flex items-center gap-[5px]">
          <RdpIcon size={18} />
          <h1 className="rounded-full bg-white/35 pr-2 text-[14px] leading-5 shadow-[0_0_8px_6px_rgba(255,255,255,0.35)]">
            192.168.0.150 - Remote Desktop Connection
          </h1>
        </div>
        <div className="ml-auto flex h-[25px] overflow-hidden rounded-b-md border border-t-0 border-[#1b2b52]">
          <button type="button" aria-label="Minimize" className="flex w-[35px] items-center justify-center border-r border-[#33497c] bg-linear-to-b from-[#b5c3de] from-48% to-[#6e86b6] to-52%">
            <svg width="17" height="15" viewBox="0 0 17 15"><path d="M.5 9.500h16v4H.5z" fill="#fff" stroke="#3c4765" /></svg>
          </button>
          <button type="button" aria-label="Maximize" className="flex w-[33px] items-center justify-center border-r border-[#33497c] bg-linear-to-b from-[#b5c3de] from-48% to-[#6e86b6] to-52%">
            <svg width="17" height="15" viewBox="0 0 17 15"><path fillRule="evenodd" d="M.5.5h16v13H.5zM4.500 4.500v5h8v-5z" fill="#fff" stroke="#3c4765" /></svg>
          </button>
          <button type="button" aria-label="Close" className="flex w-[59px] items-center justify-center bg-linear-to-b from-[#e0a094] from-48% to-[#bb3a22] to-52%">
            <svg width="16" height="15" viewBox="0 0 16 15"><path d="M1 1h4l3 3.500L11 1h4l-4.500 6.500L15 14h-4L8 10.500 5 14H1l4.500-6.500z" fill="#fff" stroke="#4c4250" /></svg>
          </button>
        </div>
      </header>
      <div className="flex flex-1 flex-col bg-[#d2d2d2] shadow-[0_0_0_1px_#16244a,0_0_0_2px_rgba(200,215,245,0.7)]">
        <div className="flex h-[22px] items-center bg-linear-to-b from-[#9ab2d0] to-[#bcd3ee] pl-[2px] pr-[3px]">
          <Tower size={16} />
          <h2 className="ml-2 text-[11px]">StreamLine XR v14-6.vi</h2>
          <div className="ml-auto flex gap-[2px]">
            <button type="button" aria-label="Minimize VI" className={MDI_BUTTON}>
              <svg width="11" height="9"><path d="M.5 4.500h10v3H.5z" fill="#fff" stroke="#555" /></svg>
            </button>
            <button type="button" aria-label="Restore VI" className={MDI_BUTTON}>
              <svg width="12" height="11"><path d="M4.500.5h7v6h-7zM.5 3.500h7v7h-7z" fill="#fff" stroke="#555" /><path d="M3 6h2v2H3z" fill="#777" /></svg>
            </button>
            <button type="button" aria-label="Close VI" className={`${MDI_BUTTON} opacity-90`}>
              <svg width="11" height="9" viewBox="0 0 11 9"><path d="M.5.5h3l2 2.500 2-2.500h3L7.500 4.500l3 4h-3l-2-2.500-2 2.500h-3l3-4z" fill="#fff" stroke="#555" /></svg>
            </button>
          </div>
        </div>
        <div className="flex-1 border-t-2 border-l-2 border-[#7a7a7a] border-r-2 border-b-2 border-r-[#f2f2f2] border-b-[#f2f2f2]">
          <TabStrip />
          <FrontPanel />
        </div>
        <RemoteTaskbar />
      </div>
    </section>
  );
}

function Taskbar() {
  return (
    <footer className="relative flex h-12 items-center border-t border-[#0a1a48] bg-[linear-gradient(to_right,#1b3068_0,#1d3672_60px,#204088_90px,#22458f_60%,#2d559f_83%,#1d3a74_86%,#24487f_93%,#1a3568_100%)] shadow-[inset_0_1px_0_#7f99cf]">
      <button type="button" aria-label="Start" className="ml-[11px]"><StartOrb size={44} id="orb-host" /></button>
      <button type="button" aria-label="Internet Explorer" className="ml-[29px]"><InternetExplorer /></button>
      <button type="button" aria-label="Explorer" className="ml-[31px]"><FolderIcon width={41} height={40} /></button>
      <button type="button" aria-label="Media Player" className="ml-[29px]"><MediaPlayer /></button>
      <button type="button" aria-label="Chrome" className="ml-[35px]">
        <svg width="41" height="41" viewBox="0 0 60 60"><ChromeLogo id="chrome-task" /></svg>
      </button>
      <button type="button" aria-label="Remote Desktop" className="ml-4 flex h-[47px] w-[62px] items-center justify-center rounded-xs border border-white/80 bg-linear-to-br from-[#c3cde4] via-[#8a9cc8] to-[#a9b7da]">
        <RdpIcon size={38} />
      </button>
      <span className="h-[47px] w-1 rounded-r-sm border border-l-0 border-white/70 bg-[#5a73ad]" />
      <div className="ml-auto flex h-full items-center text-white">
        <UpArrow />
        <span className="relative ml-[19px]">
          <FlagIcon />
          <svg width="10" height="10" className="absolute -right-px bottom-0"><circle cx="5" cy="5" r="5" fill="#d63a2c" /><path d="m3 3 4 4M7 3 3 7" stroke="#fff" strokeWidth="1.500" /></svg>
        </span>
        <svg width="19" height="20" viewBox="0 0 19 20" className="ml-[10px]">
          <path d="M1 3.500h2.500V1h4v2.500H10v15H1z" fill="#fff" stroke="#10254f" strokeWidth="0.800" />
          <path d="M11.500 7h7v2l-2 3v7h-3v-7l-2-3z" fill="#fff" stroke="#10254f" strokeWidth="0.600" />
          <path d="M13.500 2v5M16.500 2v5" stroke="#fff" strokeWidth="1.300" />
        </svg>
        <svg width="20" height="20" viewBox="0 0 20 20" className="ml-[10px]">
          <path d="M5 5h14v10H5z" fill="#24487f" stroke="#fff" strokeWidth="1.600" />
          <path d="M11 15v3M7 18.500h10" stroke="#fff" strokeWidth="2" />
          <path d="M1 1h6v7H1z" fill="#aaa" stroke="#fff" />
          <path d="M4 8v11" stroke="#fff" strokeWidth="2" />
        </svg>
        <span className="ml-[10px]"><SpeakerIcon waves={false} /></span>
        <time className="ml-[22px] w-[78px] text-center text-[14px] leading-[22px]">08:10<br />03/08/2023</time>
        <span className="ml-3 h-full w-[14px] border border-[#7a90bd] bg-linear-to-b from-[#53689a] to-[#1c3a80]" />
      </div>
    </footer>
  );
}

export default function App() {
  return (
    <div className="relative flex min-h-screen w-full flex-col overflow-hidden bg-[#0037b4] font-['Open_Sans',sans-serif] text-black">
      <Wallpaper />
      <main className="relative flex flex-1">
        <nav className="flex w-[94px] flex-col pt-[7px]">
          {DESKTOP_ICONS.map(({ label, icon }) => (
            <a
              key={label}
              href="#"
              className="flex h-[129px] flex-col items-center gap-1 px-px text-center text-[14px] leading-5 text-white [text-shadow:1px_1px_2px_#000,0_1px_3px_#000]"
            >
              {icon}
              <span>{label}</span>
            </a>
          ))}
        </nav>
        <RemoteDesktopWindow />
      </main>
      <Taskbar />
    </div>
  );
}
